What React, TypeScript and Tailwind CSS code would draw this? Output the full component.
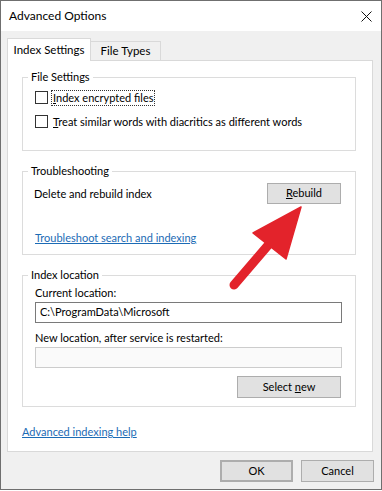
const font = "font-['Segoe_UI','Lato',sans-serif]";

function Checkbox({ label, focused }: { label: React.ReactNode; focused?: boolean }) {
  return (
    <label className="flex h-[13px] items-center gap-[3px] whitespace-nowrap">
      <span className="h-[13px] w-[13px] shrink-0 border border-[#333333] bg-white" />
      <span className={focused ? "border border-dotted border-[#333] px-[1px] leading-[14px]" : "px-[2px] leading-[14px]"}>
        {label}
      </span>
    </label>
  );
}

function WinButton({ children, className = "" }: { children: React.ReactNode; className?: string }) {
  return (
    <button className={`flex items-center justify-center border border-[#adadad] bg-[#e1e1e1] text-[11px] text-black ${className}`}>
      {children}
    </button>
  );
}

function Group({ title, className = "", children }: { title: string; className?: string; children: React.ReactNode }) {
  return (
    <fieldset className={`ml-[14px] w-[334px] border border-[#dcdcdc] px-[12px] ${className}`}>
      <legend className="-ml-[7px] px-[3px] leading-[16px]">{title}</legend>
      {children}
    </fieldset>
  );
}

export default function App() {
  return (
    <div className={`${font} relative h-[491px] w-[382px] overflow-hidden bg-white text-[11px] text-black`}>
      <div className="h-[490px] w-[382px] border border-[#6f6f6f] bg-[#f0f0f0]">
        {/* title bar */}
        <div className="flex h-[30px] items-center justify-between bg-white pl-[8px] pr-[8px]">
          <span className="text-[12px]">Advanced Options</span>
          <svg width="11" height="11" viewBox="0 0 11 11" className="mr-[1px]">
            <path d="M0.5 0.5 L10.5 10.5 M10.5 0.5 L0.5 10.5" stroke="#111" strokeWidth="1" />
          </svg>
        </div>

        {/* tabs */}
        <div className="flex h-[29px] items-end pl-[6px]">
          <div className="relative z-10 -mb-[1px] flex h-[23px] w-[84px] items-center justify-center border border-b-0 border-[#d9d9d9] bg-white text-[11.5px]">
            Index Settings
          </div>
          <div className="flex h-[19px] w-[70px] items-center justify-center border border-b-0 border-l-0 border-[#d9d9d9] bg-[#f0f0f0] text-[11.5px]">
            File Types
          </div>
        </div>

        {/* tab panel */}
        <div className="ml-[6px] h-[392px] w-[366px] border border-[#d9d9d9] bg-white pt-[8px]">
          <Group title="File Settings" className="h-[82px]">
            <div className="flex flex-col gap-[11px] pt-[6px]">
              <Checkbox
                focused
                label={
                  <>
                    <span className="underline">I</span>ndex encrypted files
                  </>
                }
              />
              <Checkbox
                label={
                  <>
                    <span className="underline">T</span>reat similar words with diacritics as different words
                  </>
                }
              />
            </div>
          </Group>

          <Group title="Troubleshooting" className="mt-[12px] h-[92px]">
            <div className="mt-[4px] flex h-[21px] items-center justify-between">
              <span className="-ml-[1px] mt-[1px]">Delete and rebuild index</span>
              <WinButton className="mr-[2px] h-[21px] w-[74px]">
                <span>
                  <span className="underline">R</span>ebuild
                </span>
              </WinButton>
            </div>
            <div className="mt-[26px]">
              <a className="text-[#1c6bb5] underline">Troubleshoot search and indexing</a>
            </div>
          </Group>

          <Group title="Index location" className="mt-[12px] h-[140px]">
            <div className="pt-[2px] leading-[15px]">Current location:</div>
            <div className="mt-[2px] flex h-[21px] w-[307px] items-center border border-[#7a7a7a] pl-[4px]">
              C:\ProgramData\Microsoft
            </div>
            <div className="mt-[7px] leading-[15px]">New location, after service is restarted:</div>
            <div className="mt-[2px] h-[21px] w-[307px] border border-[#cccccc] bg-[#fafafa]" />
            <div className="mt-[8px] flex justify-end pr-[2px]">
              <WinButton className="h-[22px] w-[104px]">
                <span>
                  Select <span className="underline">n</span>ew
                </span>
              </WinButton>
            </div>
          </Group>

          <div className="mt-[17px] pl-[14px]">
            <a className="text-[#1c6bb5] underline">Advanced indexing help</a>
          </div>
        </div>

        {/* footer buttons */}
        <div className="mt-[8px] flex justify-end gap-[8px] pr-[7px]">
          <WinButton className="h-[22px] w-[73px] border-2 border-[#0078d7]">OK</WinButton>
          <WinButton className="h-[22px] w-[73px]">Cancel</WinButton>
        </div>
      </div>

      {/* red annotation arrow */}
      <svg className="pointer-events-none absolute left-0 top-0" width="382" height="491" viewBox="0 0 382 491">
        <line x1="234" y1="285" x2="270" y2="243" stroke="#e3232b" strokeWidth="9" strokeLinecap="round" />
        <polygon points="301,207 253,233 286,259" fill="#e3232b" stroke="#e3232b" strokeWidth="1.5" strokeLinejoin="round" />
      </svg>
    </div>
  );
}
